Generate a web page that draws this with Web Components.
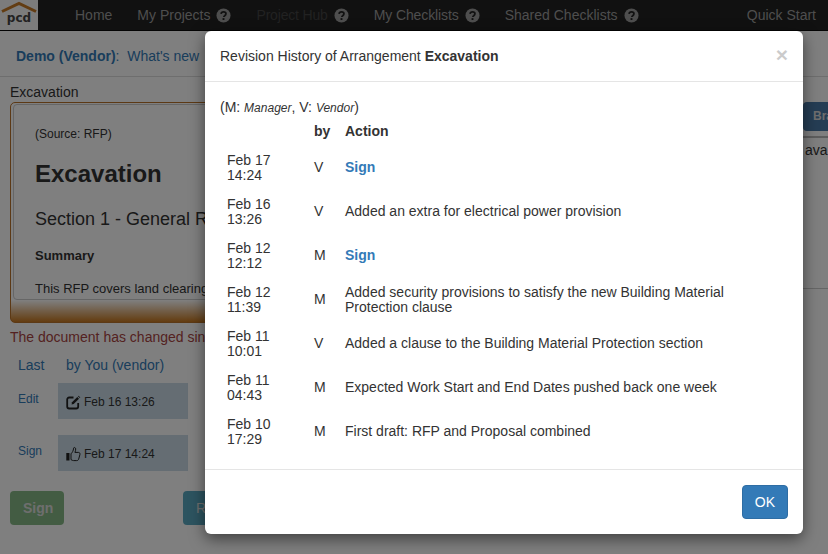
<!DOCTYPE html>
<html>
<head>
<meta charset="utf-8">
<title>Revision History</title>
<style>
  html, body { margin: 0; padding: 0; height: 554px; overflow: hidden; background: #fff; }
  body { font: 14px/20px "Liberation Sans", Arial, sans-serif; color: #333; }
</style>
</head>
<body>
<pcd-nav>
  <pcd-nav-item>Home</pcd-nav-item>
  <pcd-nav-item help>My Projects</pcd-nav-item>
  <pcd-nav-item help off style="letter-spacing:-.18px">Project Hub</pcd-nav-item>
  <pcd-nav-item help style="letter-spacing:-.1px">My Checklists</pcd-nav-item>
  <pcd-nav-item help>Shared Checklists</pcd-nav-item>
  <pcd-nav-item slot="end">Quick Start</pcd-nav-item>
</pcd-nav>
<pcd-subhead></pcd-subhead>
<pcd-main></pcd-main>
<pcd-backdrop></pcd-backdrop>
<pcd-modal>
  <span slot="title">Revision History of Arrangement <b>Excavation</b></span>
  <div class="legend">(M: <i style="font-size:12px">Manager</i>, V: <i style="font-size:12px">Vendor</i>)</div>
  <history-row head by="by" action="Action"></history-row>
  <history-row date="Feb 17" time="14:24" by="V" action="Sign" sign></history-row>
  <history-row date="Feb 16" time="13:26" by="V" action="Added an extra for electrical power provision"></history-row>
  <history-row date="Feb 12" time="12:12" by="M" action="Sign" sign></history-row>
  <history-row date="Feb 12" time="11:39" by="M" wrapped action="Added security provisions to satisfy the new Building Material Protection clause"></history-row>
  <history-row date="Feb 11" time="10:01" by="V" action="Added a clause to the Building Material Protection section"></history-row>
  <history-row date="Feb 11" time="04:43" by="M" action="Expected Work Start and End Dates pushed back one week"></history-row>
  <history-row date="Feb 10" time="17:29" by="M" action="First draft: RFP and Proposal combined"></history-row>
</pcd-modal>

<script>
const helpIcon = `<svg width="15" height="15" viewBox="0 0 16 16"><circle cx="8" cy="8" r="7.5" fill="currentColor"/><path d="M5.4 6.2C5.6 4.8 6.6 4.2 8 4.2c1.5 0 2.6.8 2.6 2 0 1-.6 1.5-1.3 2-.6.4-.9.7-.9 1.4" fill="none" stroke="#222" stroke-width="1.9"/><rect x="7" y="10.8" width="2" height="2" fill="#222"/></svg>`;

class PcdNav extends HTMLElement {
  constructor() {
    super();
    this.attachShadow({ mode: "open" }).innerHTML = `
    <style>
      :host { display: flex; height: 30px; background: #222; align-items: center; border-bottom: 1px solid #080808; }
      .logo {
        width: 38px; height: 30px; background: #f8f8f8; position: relative; flex: none;
        display: flex; justify-content: center; align-items: flex-end;
      }
      .logo svg { position: absolute; left: 1px; top: 1px; }
      .logo span { font: bold 12px/17px "DejaVu Sans", sans-serif; color: #444; padding-bottom: 3px; }
      .items { display: flex; gap: 25px; padding-left: 37px; flex: 1; }
      .end { padding-right: 12px; }
    </style>
    <div class="logo">
      <svg width="36" height="14" viewBox="0 0 36 14"><path d="M1 10.5 18 2.5l17 8" fill="none" stroke="#c77a26" stroke-width="3"/></svg>
      <span>pcd</span>
    </div>
    <div class="items"><slot></slot></div>
    <div class="end"><slot name="end"></slot></div>`;
  }
}
customElements.define("pcd-nav", PcdNav);

class PcdNavItem extends HTMLElement {
  constructor() {
    super();
    const icon = this.hasAttribute("help") ? helpIcon : "";
    this.attachShadow({ mode: "open" }).innerHTML = `
    <style>
      :host { display: inline-flex; align-items: center; gap: 6px; color: #9d9d9d; white-space: nowrap; }
      :host([off]) { color: #444; }
      svg { display: block; color: #9d9d9d; }
    </style>
    <slot></slot>${icon}`;
  }
}
customElements.define("pcd-nav-item", PcdNavItem);

class PcdSubhead extends HTMLElement {
  constructor() {
    super();
    this.attachShadow({ mode: "open" }).innerHTML = `
    <style>
      :host { display: block; height: 45px; line-height: 50px; padding-left: 16px; color: #337ab7; border-bottom: 1px solid #ddd; white-space: nowrap; overflow: hidden; }
      b { font-weight: bold; }
    </style>
    <b>Demo (Vendor)</b>:&nbsp; What's new`;
  }
}
customElements.define("pcd-subhead", PcdSubhead);

class PcdMain extends HTMLElement {
  constructor() {
    super();
    this.attachShadow({ mode: "open" }).innerHTML = `
    <style>
      :host { display: grid; grid-template-columns: 803px 25px; height: 477px; overflow: hidden; }
      .left { padding: 5px 0 0 10px; }
      .label { height: 20px; }
      .panel {
        width: 480px; height: 218px; border: 1px solid #b8722a; border-radius: 5px; padding: 1px 2px 0;
        background: linear-gradient(to bottom, #fff 90%, #c8781f 100%);
      }
      .doc { height: 196px; border: 1px solid #ccc; border-radius: 4px; background: #fff; padding-left: 21px; overflow: hidden; box-sizing: border-box; }
      .src { font-size: 12px; line-height: 17px; margin-top: 21px; }
      h1 { font-size: 24px; line-height: 26px; margin: 18px 0 0; color: #333; }
      h2 { font-size: 18px; line-height: 20px; margin: 22px 0 0; font-weight: normal; white-space: nowrap; }
      h3 { font-size: 13px; line-height: 18px; margin: 18px 0 0; }
      p { font-size: 13px; line-height: 18px; margin: 15px 0 0; white-space: nowrap; }
      .warn { color: #a94442; margin-top: 4px; white-space: nowrap; }
      .right { padding-top: 25px; overflow: hidden; white-space: nowrap; }
      .bra {
        height: 29px; background: #4a7aa8; color: #ddd; font-weight: bold; font-size: 12px; line-height: 29px;
        border-radius: 4px 0 0 4px; padding-left: 10px; overflow: hidden;
      }
      .rule { height: 2px; background: #bbb; margin-top: 5px; }
      .tab { padding-left: 2px; line-height: 24px; height: 150px; border-bottom: 1px solid #ccc; }
      .btns { display: flex; margin-top: 20px; }
      .btn { height: 34px; border-radius: 4px; color: #ddd; line-height: 34px; padding: 0 13px; box-sizing: border-box; }
      .ok { background: #86b986; width: 54px; margin-right: 119px; font-weight: bold; }
      .rev { background: #5aa9c0; width: 120px; }
    </style>
    <div class="left">
      <div class="label">Excavation</div>
      <div class="panel">
        <div class="doc">
          <div class="src">(Source: RFP)</div>
          <h1>Excavation</h1>
          <h2>Section 1 - General Requirements</h2>
          <h3>Summary</h3>
          <p>This RFP covers land clearing and excavation</p>
        </div>
      </div>
      <div class="warn">The document has changed since you last signed.</div>
      <last-table></last-table>
      <div class="btns"><div class="btn ok">Sign</div><div class="btn rev">Revise</div></div>
    </div>
    <div class="right">
      <div class="bra">Bra</div>
      <div class="rule"></div>
      <div class="tab">ava</div>
    </div>`;
  }
}
customElements.define("pcd-main", PcdMain);

class LastTable extends HTMLElement {
  constructor() {
    super();
    this.attachShadow({ mode: "open" }).innerHTML = `
    <style>
      :host { display: block; margin-top: 8px; width: 178px; color: #337ab7; }
      .head { display: flex; padding-left: 8px; height: 20px; }
      .head span:first-child { width: 48px; }
      .row { display: flex; align-items: flex-start; height: 36px; margin-top: 16px; }
      .head + .row { margin-top: 8px; }
      .name { width: 40px; padding-left: 8px; font-size: 12px; line-height: 32px; }
      .when {
        width: 130px; height: 36px; background: #cadbe6; color: #333; font-size: 12px;
        display: flex; align-items: center; gap: 3px; padding: 2px 0 0 8px; box-sizing: border-box;
      }
      svg { flex: none; }
    </style>
    <div class="head"><span>Last</span><span>by You (vendor)</span></div>
    <div class="row">
      <span class="name">Edit</span>
      <span class="when">
        <svg width="15" height="15" viewBox="0 0 15 15"><path d="M7.5 2.5H3.2C2 2.5 1.2 3.3 1.2 4.5v7c0 1.2.8 2 2 2h7c1.2 0 2-.8 2-2V8" fill="none" stroke="#222" stroke-width="1.8"/><path d="M6 7.3 11.3 2 13 3.7 7.7 9 5.6 9.4z" fill="#222"/><path d="M11.9 1.3l.7-.6 1.7 1.7-.6.7z" fill="#222"/></svg>
        Feb 16 13:26
      </span>
    </div>
    <div class="row">
      <span class="name">Sign</span>
      <span class="when">
        <svg width="15" height="16" viewBox="0 0 15 16"><rect x="0.3" y="7" width="3.2" height="7.5" fill="#222"/><path d="M5 7.8c1.3-1.3 2.4-3 2.6-5.6.1-1 1.9-1 2.1.6.2 1.3-.4 2.6-.8 3.6h3.5c1.3 0 1.9 1.2 1.5 2.3l-1.2 4.3c-.3 1-.9 1.6-2 1.6H7.6c-1 0-1.6-.4-2.6-1z" fill="none" stroke="#222" stroke-width="1"/></svg>
        Feb 17 14:24
      </span>
    </div>`;
  }
}
customElements.define("last-table", LastTable);

class PcdBackdrop extends HTMLElement {
  constructor() {
    super();
    this.attachShadow({ mode: "open" }).innerHTML = `
    <style>
      :host { display: block; position: absolute; inset: 0; background: rgba(0, 0, 0, .5); }
    </style>`;
  }
}
customElements.define("pcd-backdrop", PcdBackdrop);

class PcdModal extends HTMLElement {
  constructor() {
    super();
    this.attachShadow({ mode: "open" }).innerHTML = `
    <style>
      :host {
        display: flex; flex-direction: column; position: absolute; left: 205px; top: 31px; width: 598px; height: 503px;
        background: #fff; border-radius: 6px; box-shadow: 0 5px 15px rgba(0, 0, 0, .5); color: #333;
      }
      header { display: flex; justify-content: space-between; padding: 15px; height: 20px; border-bottom: 1px solid #e5e5e5; }
      .close { font-size: 21px; font-weight: bold; line-height: 18px; color: #000; opacity: .2; }
      main { flex: 1; padding: 15px; }
      ::slotted(.legend) { margin-bottom: 1px; }
      footer { display: flex; justify-content: flex-end; padding: 15px; border-top: 1px solid #e5e5e5; }
      button {
        font: 14px/20px "Liberation Sans", Arial, sans-serif; height: 34px; padding: 6px 12px; color: #fff;
        background: #337ab7; border: 1px solid #2e6da4; border-radius: 4px;
      }
    </style>
    <header><span><slot name="title"></slot></span><span class="close">×</span></header>
    <main><slot></slot></main>
    <footer><button>OK</button></footer>`;
  }
}
customElements.define("pcd-modal", PcdModal);

class HistoryRow extends HTMLElement {
  constructor() {
    super();
    const head = this.hasAttribute("head");
    const sign = this.hasAttribute("sign");
    const date = head ? "" : `${this.getAttribute("date")}<br>${this.getAttribute("time")}`;
    this.attachShadow({ mode: "open" }).innerHTML = `
    <style>
      :host { display: grid; grid-template-columns: 94px 31px 1fr; align-items: center; height: 44px; line-height: 15px; }
      :host([head]) { height: 24px; margin-bottom: 2px; font-weight: bold; line-height: 20px; }
      .d { padding: 2px 0 0 7px; }
      :host([wrapped]) .a { padding-top: 2px; }
      .s { color: #337ab7; font-weight: bold; }
    </style>
    <div class="d">${date}</div>
    <div class="b">${this.getAttribute("by")}</div>
    <div class="a${sign ? " s" : ""}">${this.getAttribute("action")}</div>`;
  }
}
customElements.define("history-row", HistoryRow);
</script>
</body>
</html>
